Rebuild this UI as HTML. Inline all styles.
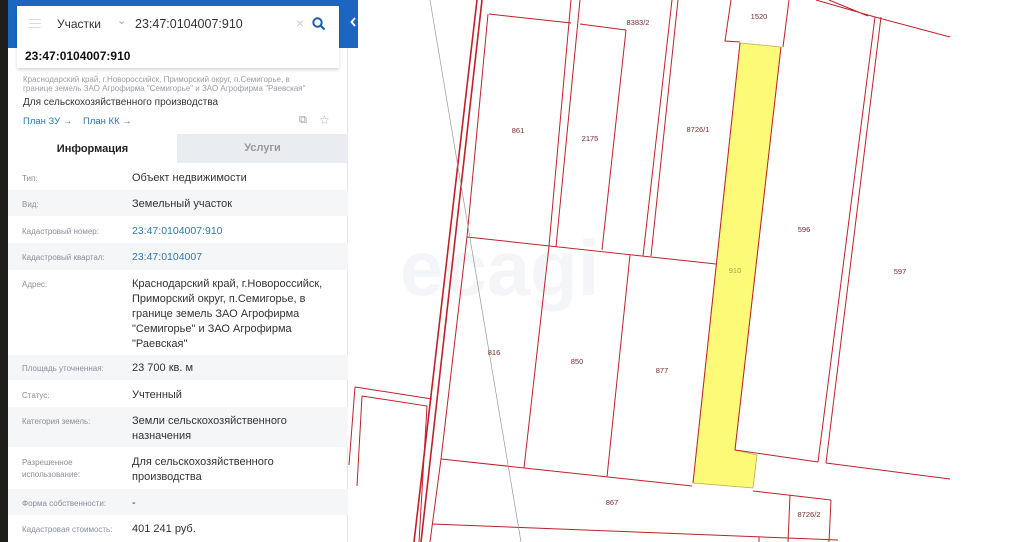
<!DOCTYPE html>
<html><head><meta charset="utf-8"><style>
*{margin:0;padding:0;box-sizing:border-box}
body{width:1023px;height:542px;overflow:hidden;position:relative;background:#fff;font-family:"Liberation Sans","DejaVu Sans",sans-serif}
#dark{position:absolute;left:0;top:0;width:8px;height:542px;background:#1f1e1a}
#blue{position:absolute;left:8px;top:0;width:350px;height:48px;background:#1a66c0}
#panel{position:absolute;left:8px;top:48px;width:340px;height:494px;background:#fff;border-right:1px solid #e3e5e8}
#search{position:absolute;left:17px;top:6px;width:322px;height:62px;background:#fff;box-shadow:0 2px 3px rgba(0,0,0,.15);font-size:12px;color:#333}
.abs{position:absolute;white-space:nowrap}
.lbl{position:absolute;left:22px;font-size:8px;color:#8a8f96;line-height:12px}
.val{position:absolute;left:132px;font-size:11px;color:#333;line-height:15px}
.row{position:absolute;left:8px;width:340px}
.g{background:#f5f6f8}
.lnk{color:#2b79ad}
#map{position:absolute;left:348px;top:0}
</style></head><body>
<div id="dark"></div>
<div id="blue"></div>
<svg class="abs" style="left:348px;top:14px" width="10" height="16"><path d="M7 4 L3.5 8 L7 12" stroke="#fff" stroke-width="1.8" fill="none"/></svg>
<div id="panel"></div>
<div id="search">
 <div class="abs" style="left:12px;top:13px;width:12px;height:1px;background:#ddd;box-shadow:0 4px 0 #ddd,0 8px 0 #ddd"></div>
 <div class="abs" style="left:40px;top:11px">Участки</div>
 <div class="abs" style="left:100px;top:8px;color:#aaa;font-size:11px">⌄</div>
 <div class="abs" style="left:118px;top:11px;font-size:12.5px">23:47:0104007:910</div>
 <div class="abs" style="left:279px;top:9px;color:#ccc;font-size:14px">×</div>
 <svg class="abs" style="left:295px;top:11px" width="14" height="14"><circle cx="5.5" cy="5.5" r="4.2" stroke="#1a5fa8" stroke-width="2" fill="none"/><path d="M8.5 8.5 L12.5 12.5" stroke="#1a5fa8" stroke-width="2.2"/></svg>
 <div class="abs" style="left:8px;top:43px;font-weight:bold;font-size:12px;color:#111">23:47:0104007:910</div>
</div>
<div class="abs" style="left:23px;top:75px;font-size:8px;color:#9a9ea4;line-height:9px">Краснодарский край, г.Новороссийск, Приморский округ, п.Семигорье, в<br>границе земель ЗАО Агрофирма "Семигорье" и ЗАО Агрофирма "Раевская"</div>
<div class="abs" style="left:23px;top:97px;font-size:10px;color:#333">Для сельскохозяйственного производства</div>
<div class="abs lnk" style="left:23px;top:116px;font-size:9.5px">План ЗУ →</div>
<div class="abs lnk" style="left:83px;top:116px;font-size:9.5px">План КК →</div>
<div class="abs" style="left:299px;top:114px;color:#999;font-size:11px">⧉</div>
<div class="abs" style="left:319px;top:113px;color:#aaa;font-size:12px">☆</div>
<div class="abs" style="left:177px;top:134px;width:171px;height:29px;background:#e9ecf0;color:#999;font-size:11px;font-weight:bold;text-align:center;line-height:29px">Услуги</div>
<div class="abs" style="left:8px;top:135px;width:169px;height:29px;color:#222;font-size:11px;font-weight:bold;text-align:center;line-height:29px">Информация</div>

<div class="row g" style="top:190px;height:26px"></div>
<div class="row g" style="top:243px;height:27px"></div>
<div class="row g" style="top:355px;height:25px"></div>
<div class="row g" style="top:407px;height:40px"></div>
<div class="row g" style="top:489px;height:26px"></div>

<div class="lbl" style="top:173px">Тип:</div><div class="val" style="top:171px">Объект недвижимости</div>
<div class="lbl" style="top:199px">Вид:</div><div class="val" style="top:197px">Земельный участок</div>
<div class="lbl" style="top:226px">Кадастровый номер:</div><div class="val lnk" style="top:224px;font-size:10.5px">23:47:0104007:910</div>
<div class="lbl" style="top:252px">Кадастровый квартал:</div><div class="val lnk" style="top:250px;font-size:10.5px">23:47:0104007</div>
<div class="lbl" style="top:279px">Адрес:</div><div class="val" style="top:277px">Краснодарский край, г.Новороссийск,<br>Приморский округ, п.Семигорье, в<br>границе земель ЗАО Агрофирма<br>"Семигорье" и ЗАО Агрофирма<br>"Раевская"</div>
<div class="lbl" style="top:363px">Площадь уточненная:</div><div class="val" style="top:361px">23 700 кв. м</div>
<div class="lbl" style="top:390px">Статус:</div><div class="val" style="top:388px">Учтенный</div>
<div class="lbl" style="top:416px">Категория земель:</div><div class="val" style="top:414px">Земли сельскохозяйственного<br>назначения</div>
<div class="lbl" style="top:457px">Разрешенное<br>использование:</div><div class="val" style="top:455px">Для сельскохозяйственного<br>производства</div>
<div class="lbl" style="top:498px">Форма собственности:</div><div class="val" style="top:496px">-</div>
<div class="lbl" style="top:524px">Кадастровая стоимость:</div><div class="val" style="top:522px">401 241 руб.</div>

<svg id="map" width="675" height="542" viewBox="348 0 675 542">
<text x="400" y="295" font-size="78" font-weight="bold" fill="#f4f5f8" font-family="Liberation Sans,sans-serif">ecagi</text>
<polygon points="740,43 781,47 735,450 757,455 753,488 693,483" fill="#fdfa78" stroke="#b8b040" stroke-width="0.8"/>
<g stroke="#c0202a" stroke-width="1" fill="none">
<path d="M477 0 L414 542 M482 0 L421 542" stroke-width="1.6"/>
<path d="M489 14 L571 23 M580 24 L626 30"/>
<path d="M488 14 L467 237 M571 0 L549 246 M580 0 L556 247 M626 30 L602 250 M672 0 L643 256 M678 0 L651 256"/>
<path d="M467 237 L716 264"/>
<path d="M731 0 L725 41 L740 42 M789 0 L783 47"/>
<path d="M740 43 L693 483 M781 47 L735 450 L818 462"/>
<path d="M875 17 L818 462 M881 17 L826 463"/>
<path d="M816 0 L875 17 L950 37 M829 0 L868 16"/>
<path d="M826 463 L950 479"/>
<path d="M630 255 L607 477 M549 246 L524 468"/>
<path d="M441 459 L692 486 M753 491 L831 500"/>
<path d="M790 495 L788 542 M831 500 L829 542"/>
<path d="M432 524 L838 540"/>
<path d="M355 387 L432 399 M349 465 L355 387 M362 396 L427 406 L419 542 M362 396 L357 486"/>
<path d="M467 237 L441 459 L430 542"/>
<path d="M759 537 L759 542"/>
</g>
<path d="M430 0 L521 542" stroke="#999" stroke-width="0.7"/>
<g font-size="7.5" fill="#7a2a30" font-family="Liberation Sans,sans-serif" text-anchor="middle">
<text x="759" y="19">1520</text><text x="638" y="25">8383/2</text><text x="518" y="133">861</text>
<text x="590" y="141">2175</text><text x="698" y="132">8726/1</text><text x="804" y="232">596</text>
<text x="735" y="273" fill="#a0a050">910</text><text x="900" y="274">597</text><text x="494" y="355">816</text>
<text x="577" y="364">850</text><text x="662" y="373">877</text><text x="612" y="505">867</text>
<text x="809" y="517">8726/2</text>
</g>
</svg>
</body></html>
